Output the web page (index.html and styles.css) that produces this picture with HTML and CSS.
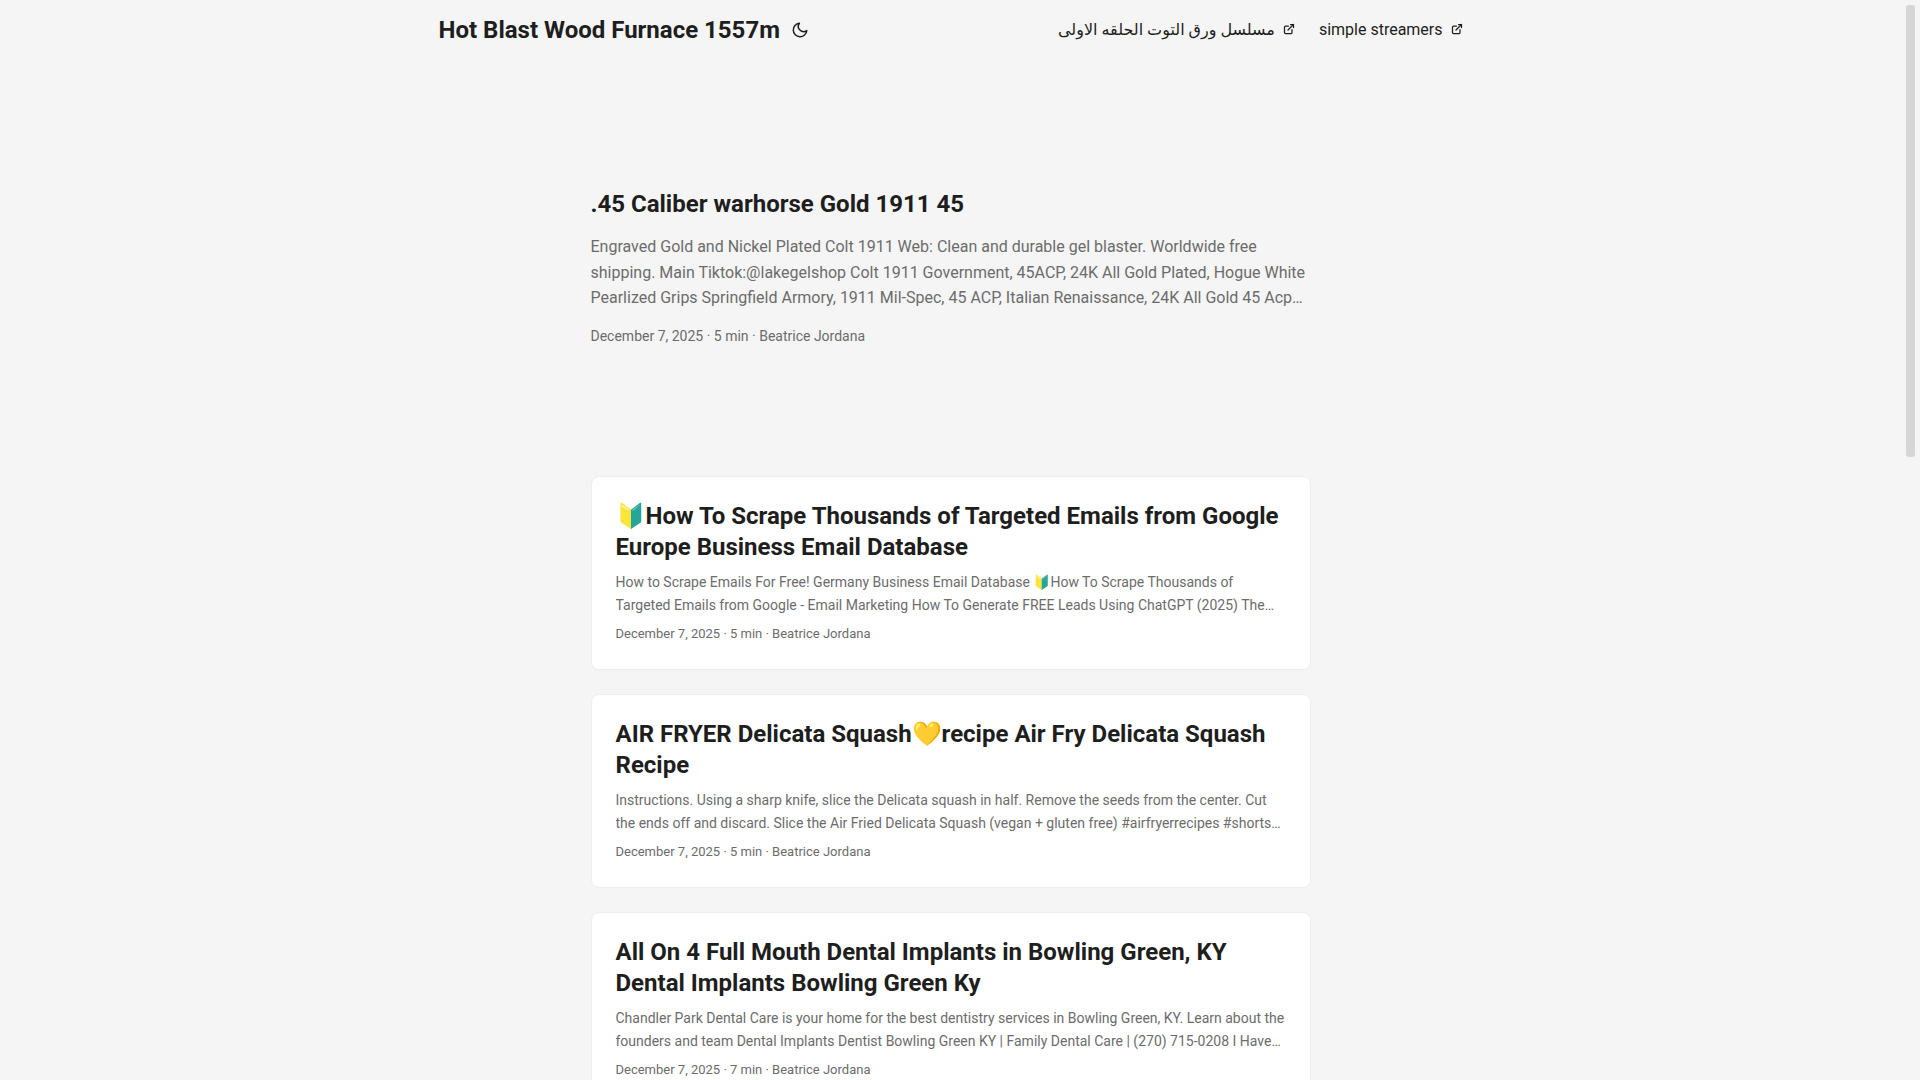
FILE: index.html
```html
<!DOCTYPE html>
<html lang="en">
<head>
<meta charset="utf-8">
<title>Hot Blast Wood Furnace 1557m</title>
<link rel="stylesheet" href="styles.css">
</head>
<body>
<div class="scroll-thumb" aria-hidden="true"></div>
<header class="header">
  <nav class="nav">
    <div class="logo">
      <a href="#">Hot Blast Wood Furnace 1557m</a>
      <button class="theme-toggle" type="button" aria-label="Toggle theme">
        <svg viewBox="0 0 24 24" width="24" height="18" fill="none" stroke="currentColor" stroke-width="2" stroke-linecap="round" stroke-linejoin="round"><path d="M21 12.79A9 9 0 1 1 11.21 3 7 7 0 0 0 21 12.79z"/></svg>
      </button>
    </div>
    <ul class="menu">
      <li><a href="#"><span>مسلسل ورق التوت الحلقه الاولى</span>
        <svg class="ext" viewBox="0 0 24 24" width="12" height="12" fill="none" stroke="currentColor" stroke-width="2.5" stroke-linecap="round" stroke-linejoin="round"><path d="M18 13v6a2 2 0 01-2 2H5a2 2 0 01-2-2V8a2 2 0 012-2h6"/><path d="M15 3h6v6"/><path d="M10 14L21 3"/></svg></a></li>
      <li><a href="#"><span>simple streamers</span>
        <svg class="ext" viewBox="0 0 24 24" width="12" height="12" fill="none" stroke="currentColor" stroke-width="2.5" stroke-linecap="round" stroke-linejoin="round"><path d="M18 13v6a2 2 0 01-2 2H5a2 2 0 01-2-2V8a2 2 0 012-2h6"/><path d="M15 3h6v6"/><path d="M10 14L21 3"/></svg></a></li>
    </ul>
  </nav>
</header>
<main class="main">
  <article class="first-entry">
    <h2 class="first-title">.45 Caliber warhorse Gold 1911 45</h2>
    <p class="first-content">Engraved Gold and Nickel Plated Colt 1911 Web: Clean and durable gel blaster. Worldwide free shipping. Main Tiktok:@lakegelshop Colt 1911 Government, 45ACP, 24K All Gold Plated, Hogue White Pearlized Grips Springfield Armory, 1911 Mil-Spec, 45 ACP, Italian Renaissance, 24K All Gold 45 Acp Pistol with engraved slide and custom grips for collectors</p>
    <footer class="first-footer">December 7, 2025&nbsp;·&nbsp;5 min&nbsp;·&nbsp;Beatrice Jordana</footer>
  </article>
  <article class="post-entry">
    <h2 class="post-title">🔰How To Scrape Thousands of Targeted Emails from Google Europe Business Email Database</h2>
    <p class="post-content">How to Scrape Emails For Free! Germany Business Email Database 🔰How To Scrape Thousands of Targeted Emails from Google - Email Marketing How To Generate FREE Leads Using ChatGPT (2025) The Best Way To Find Business Emails For Cold Outreach Campaigns</p>
    <footer class="post-footer">December 7, 2025&nbsp;·&nbsp;5 min&nbsp;·&nbsp;Beatrice Jordana</footer>
  </article>
  <article class="post-entry">
    <h2 class="post-title">AIR FRYER Delicata Squash💛recipe Air Fry Delicata Squash Recipe</h2>
    <p class="post-content">Instructions. Using a sharp knife, slice the Delicata squash in half. Remove the seeds from the center. Cut the ends off and discard. Slice the Air Fried Delicata Squash (vegan + gluten free) #airfryerrecipes #shorts How To Make Crispy Air Fryer Squash At Home With Simple Seasoning</p>
    <footer class="post-footer">December 7, 2025&nbsp;·&nbsp;5 min&nbsp;·&nbsp;Beatrice Jordana</footer>
  </article>
  <article class="post-entry">
    <h2 class="post-title">All On 4 Full Mouth Dental Implants in Bowling Green, KY Dental Implants Bowling Green Ky</h2>
    <p class="post-content">Chandler Park Dental Care is your home for the best dentistry services in Bowling Green, KY. Learn about the founders and team Dental Implants Dentist Bowling Green KY | Family Dental Care | (270) 715-0208 I Have Been Looking For A Dentist For Years And Finally Found One Here</p>
    <footer class="post-footer">December 7, 2025&nbsp;·&nbsp;7 min&nbsp;·&nbsp;Beatrice Jordana</footer>
  </article>
</main>
</body>
</html>
```
FILE: styles.css
```css
* { box-sizing: border-box; }
html { background: #f5f5f5; }
body {
  margin: 0;
  padding-right: 19px;
  background: #f5f5f5;
  color: #1e1e1e;
  font-family: Roboto, "Noto Sans", "DejaVu Sans", sans-serif;
  font-size: 18px;
  line-height: 1.6;
}
a { color: inherit; text-decoration: none; }
.scroll-thumb {
  position: fixed;
  top: 5px;
  right: 5px;
  width: 9px;
  height: 452px;
  background: #d6d6d6;
  border-radius: 3px;
}
.nav {
  display: flex;
  justify-content: space-between;
  max-width: 1072px;
  margin: 0 auto;
  padding-bottom: 2px;
  line-height: 58px;
}
.logo { display: flex; align-items: center; margin: auto 24px; }
.logo a { font-size: 24px; font-weight: 700; }
.theme-toggle {
  display: inline-flex;
  margin-left: 8px;
  padding: 0;
  border: 0;
  background: none;
  color: inherit;
}
.menu { display: flex; list-style: none; margin: auto 24px; padding: 0; }
.menu li + li { margin-left: 24px; }
.menu a { font-size: 16px; }
.ext { margin-left: 4px; }
.main { max-width: 768px; min-height: 2410px; margin: 0 auto; padding: 24px; }
.first-entry {
  display: flex;
  flex-direction: column;
  justify-content: center;
  min-height: 320px;
  margin: 24px 0 47px;
}
.first-title { margin: -1px 0 1.8px; font-size: 24px; font-weight: 700; line-height: 1.2; }
.first-content {
  display: -webkit-box;
  -webkit-box-orient: vertical;
  -webkit-line-clamp: 3;
  overflow: hidden;
  margin: 14px 0 14.2px;
  color: #6c6c6c;
  font-size: 16px;
  line-height: 1.6;
}
.first-footer { color: #6c6c6c; font-size: 14px; }
.post-entry {
  margin-bottom: 24px;
  padding: 24px;
  background: #fff;
  border: 1px solid #eee;
  border-radius: 8px;
}
.post-title { margin: 0; font-size: 24px; font-weight: 700; line-height: 1.3; }
.post-content {
  display: -webkit-box;
  -webkit-box-orient: vertical;
  -webkit-line-clamp: 2;
  overflow: hidden;
  margin: 8px 0;
  color: #6c6c6c;
  font-size: 14px;
  line-height: 1.6;
}
.post-footer { color: #6c6c6c; font-size: 13px; }
```
